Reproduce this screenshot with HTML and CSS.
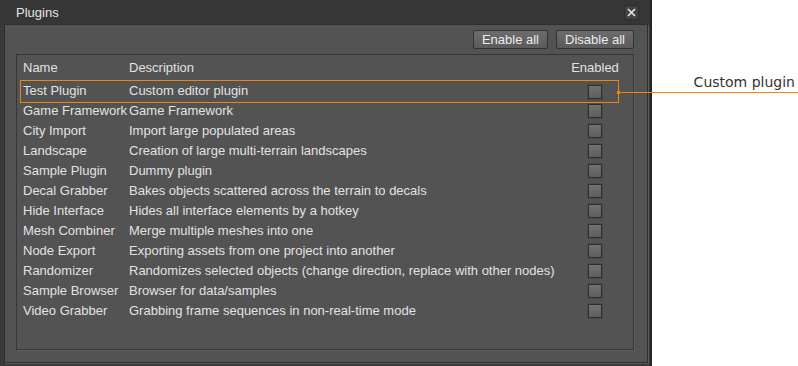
FILE: index.html
```html
<!DOCTYPE html>
<html lang="en">
<head>
    <meta charset="UTF-8">
    <title>Plugins</title>
    <link rel="stylesheet" href="styles.css">
</head>
<body>
    <div class="window">
        <div class="titlebar">
            <div class="title">Plugins</div>
            <button class="close-btn">
                <svg width="9" height="9" viewBox="0 0 9 9">
                    <path d="M1 1 L8 8 M8 1 L1 8" stroke="#e6e6e6" stroke-width="1.6" fill="none"/>
                </svg>
            </button>
        </div>
        <div class="panel">
            <div class="toolbar">
                <button class="tool-btn">Enable all</button>
                <button class="tool-btn">Disable all</button>
            </div>
            <div class="table-box">
                <div class="row header">
                    <div>Name</div>
                    <div>Description</div>
                    <div class="col-enabled">Enabled</div>
                </div>
                <div class="row marked">
                    <div>Test Plugin</div>
                    <div>Custom editor plugin</div>
                    <div class="col-enabled"><span class="check"></span></div>
                </div>
                <div class="row">
                    <div>Game Framework</div>
                    <div>Game Framework</div>
                    <div class="col-enabled"><span class="check"></span></div>
                </div>
                <div class="row">
                    <div>City Import</div>
                    <div>Import large populated areas</div>
                    <div class="col-enabled"><span class="check"></span></div>
                </div>
                <div class="row">
                    <div>Landscape</div>
                    <div>Creation of large multi-terrain landscapes</div>
                    <div class="col-enabled"><span class="check"></span></div>
                </div>
                <div class="row">
                    <div>Sample Plugin</div>
                    <div>Dummy plugin</div>
                    <div class="col-enabled"><span class="check"></span></div>
                </div>
                <div class="row">
                    <div>Decal Grabber</div>
                    <div>Bakes objects scattered across the terrain to decals</div>
                    <div class="col-enabled"><span class="check"></span></div>
                </div>
                <div class="row">
                    <div>Hide Interface</div>
                    <div>Hides all interface elements by a hotkey</div>
                    <div class="col-enabled"><span class="check"></span></div>
                </div>
                <div class="row">
                    <div>Mesh Combiner</div>
                    <div>Merge multiple meshes into one</div>
                    <div class="col-enabled"><span class="check"></span></div>
                </div>
                <div class="row">
                    <div>Node Export</div>
                    <div>Exporting assets from one project into another</div>
                    <div class="col-enabled"><span class="check"></span></div>
                </div>
                <div class="row">
                    <div>Randomizer</div>
                    <div>Randomizes selected objects (change direction, replace with other nodes)</div>
                    <div class="col-enabled"><span class="check"></span></div>
                </div>
                <div class="row">
                    <div>Sample Browser</div>
                    <div>Browser for data/samples</div>
                    <div class="col-enabled"><span class="check"></span></div>
                </div>
                <div class="row">
                    <div>Video Grabber</div>
                    <div>Grabbing frame sequences in non-real-time mode</div>
                    <div class="col-enabled"><span class="check"></span></div>
                </div>
            </div>
        </div>
    </div>

    <!-- callout label -->
    <div class="callout">Custom plugin</div>
</body>
</html>
```

FILE: styles.css
```css
body {
    margin: 0;
    padding: 0;
    background: white;
    display: flex;
    align-items: flex-start;
    font-family: "Liberation Sans", Arial, sans-serif;
    font-size: 13px;
    overflow: hidden;
}

/* Window frame */
.window {
    width: 650px;
    height: 366px;
    background: #393939;
    border-right: 2px solid #262626;
    display: flex;
    flex-direction: column;
}

.titlebar {
    height: 24px;
    display: flex;
    justify-content: space-between;
    align-items: center;
    background: #363636;
    padding: 0 11px 0 16px;
}

.title {
    color: #e4e4e4;
    padding-top: 1px;
}

.close-btn {
    width: 15px;
    height: 15px;
    padding: 0;
    margin-top: 1px;
    border: 1px solid #2c2c2c;
    border-radius: 2px;
    background: #424242;
    display: flex;
    justify-content: center;
    align-items: center;
}

/* Inner panel */
.panel {
    margin: 0 2px 3px 4px;
    flex: 1;
    background: #535353;
    border: 1px solid #2e2e2e;
    box-shadow: 1px 1px 0 #5c5c5c;
    padding: 5px 13px 12px 11px;
    display: flex;
    flex-direction: column;
}

.toolbar {
    display: flex;
    justify-content: flex-end;
    gap: 8px;
    margin-bottom: 5px;
}

.tool-btn {
    height: 19px;
    padding: 0 8px;
    border: 1px solid #333;
    border-radius: 2px;
    background: linear-gradient(#6c6c6c, #5b5b5b);
    color: #ececec;
    font-family: "Liberation Sans", Arial, sans-serif;
    font-size: 13px;
    line-height: 17px;
}

.table-box {
    flex: 1;
    border: 1px solid #363636;
    box-shadow: 1px 1px 0 #5e5e5e;
    padding: 3px 15px 0 4px;
}

.row {
    display: grid;
    grid-template-columns: 106px 442px 48px;
    height: 20px;
    line-height: 20px;
    padding-left: 2px;
    color: #e2e2e2;
    white-space: nowrap;
    position: relative;
}

.row.header {
    margin-bottom: 3px;
}

.col-enabled {
    display: flex;
    justify-content: center;
    align-items: center;
}

.check {
    width: 12px;
    height: 12px;
    margin-left: -1px;
    border: 1px solid #2e2e2e;
    background: linear-gradient(#727272, #5e5e5e);
    box-shadow: 0 0 0 1px #4b4b4b;
}

/* highlighted row + leader line */
.row.marked {
    outline: 1px solid #f5820f;
    height: 21px;
    margin-bottom: -1px;
}

.row.marked::before {
    content: "";
    position: absolute;
    left: 596px;
    top: 10px;
    width: 3px;
    height: 3px;
    background: #f5820f;
}

.row.marked::after {
    content: "";
    position: absolute;
    left: 598px;
    top: 11px;
    width: 200px;
    height: 1px;
    background: #f5820f;
}

.callout {
    flex: 1;
    padding: 74px 3px 0 0;
    text-align: right;
    font-family: "DejaVu Sans", sans-serif;
    font-size: 14px;
    color: #333;
}
```
